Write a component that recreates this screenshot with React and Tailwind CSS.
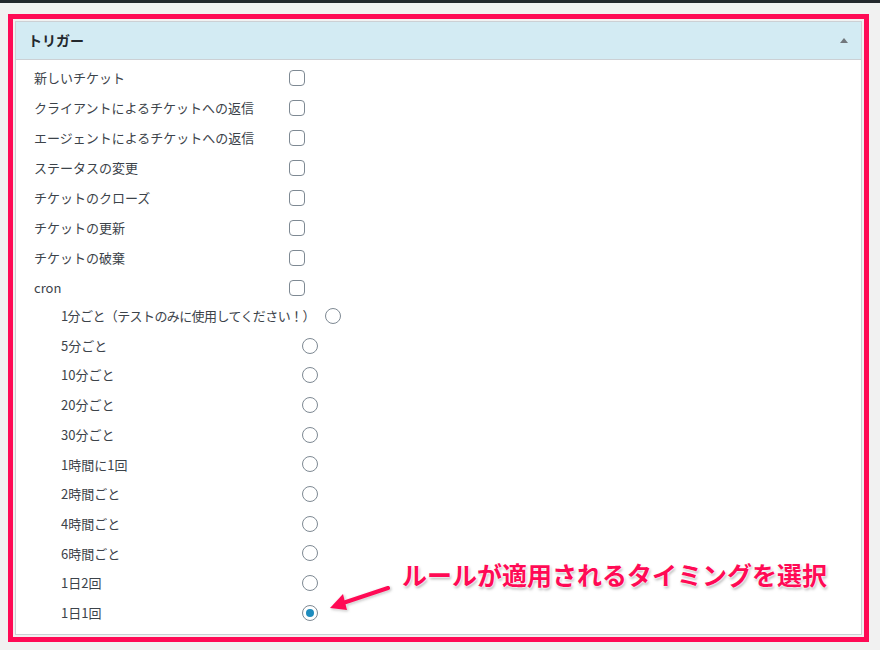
import React from 'react'

const font = { fontFamily: '"Noto Sans CJK JP", "Noto Sans", sans-serif' }

const triggers = [
  '新しいチケット',
  'クライアントによるチケットへの返信',
  'エージェントによるチケットへの返信',
  'ステータスの変更',
  'チケットのクローズ',
  'チケットの更新',
  'チケットの破棄',
  'cron',
]

const schedules = [
  '1分ごと（テストのみに使用してください！）',
  '5分ごと',
  '10分ごと',
  '20分ごと',
  '30分ごと',
  '1時間に1回',
  '2時間ごと',
  '4時間ごと',
  '6時間ごと',
  '1日2回',
  '1日1回',
]

function Checkbox() {
  return <span className="block w-4 h-4 rounded-[4px] border border-[#7e8993] bg-white" />
}

function Radio({ checked }) {
  return (
    <span className="flex items-center justify-center w-4 h-4 rounded-full border border-[#7e8993] bg-white">
      {checked && <span className="w-2 h-2 rounded-full bg-[#1e8cbe]" />}
    </span>
  )
}

export default function App() {
  return (
    <div className="w-[880px] h-[650px] bg-[#f1f1f1] overflow-hidden" style={font}>
      <div className="h-[3px] bg-[#23282d]" />
      <div className="ml-2 mt-[11px] w-[861px] h-[628px] border-[5px] border-[#ff0a55] p-[2px]">
        <div className="relative h-full border border-[#ccd0d4] bg-white">
          <div className="flex items-center justify-between h-[38px] pl-3 pr-[13px] bg-[#d3ebf3] border-b border-[#ccd0d4]">
            <span className="text-[14px] font-bold text-[#23282d]">トリガー</span>
            <span className="w-0 h-0 border-l-[4px] border-r-[4px] border-b-[5px] border-l-transparent border-r-transparent border-b-[#72777c]" />
          </div>
          <div className="pt-[3px] text-[13px] text-[#3c434a]">
            {triggers.map((t) => (
              <div key={t} className="flex items-center h-[30px] pl-[18px]">
                <span className="w-[244px] mr-[11px] shrink-0 whitespace-nowrap">{t}</span>
                <Checkbox />
              </div>
            ))}
            <div className="-mt-[2px]">
              {schedules.map((s, i) => (
                <div key={s} className="flex items-center h-[29.7px] pl-[45px]">
                  <span className={i === 0 ? 'min-w-[230px] mr-[10px] whitespace-nowrap tracking-[-0.6px]' : 'min-w-[230px] mr-[11px] whitespace-nowrap'}>{s}</span>
                  <Radio checked={i === schedules.length - 1} />
                </div>
              ))}
            </div>
          </div>
          <div className="absolute left-[310px] top-[540px] flex items-start">
            <svg width="66" height="36" viewBox="0 0 66 36" className="mt-[18px] [filter:drop-shadow(0_0_1px_#fff)_drop-shadow(1px_1px_1px_rgba(0,0,0,0.25))]">
              <path d="M62 8 L14 24" stroke="#ff0a55" strokeWidth="4" strokeLinecap="round" fill="none" />
              <path d="M4 28 L17 14 L21 30 Z" fill="#ff0a55" />
            </svg>
            <span className="ml-[10px] text-[25px] font-bold leading-none text-[#ff0a55] whitespace-nowrap [text-shadow:0_0_2px_#fff,0_0_2px_#fff,0_0_3px_#fff,1px_2px_3px_rgba(0,0,0,0.35)]">
              ルールが適用されるタイミングを選択
            </span>
          </div>
        </div>
      </div>
    </div>
  )
}
